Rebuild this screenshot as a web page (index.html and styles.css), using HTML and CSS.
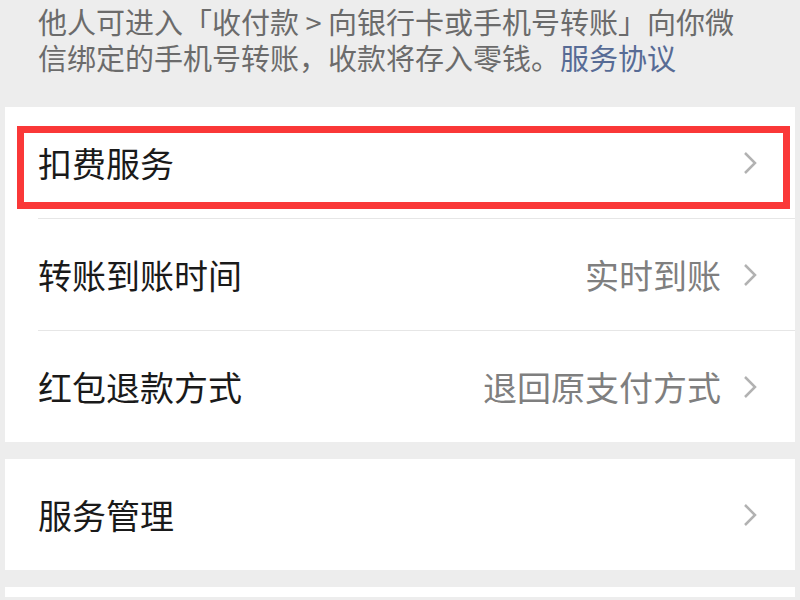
FILE: index.html
```html
<!DOCTYPE html>
<html lang="zh-CN">

<head>
    <meta charset="UTF-8">
    <meta name="viewport" content="width=device-width, initial-scale=1.0">
    <title>支付设置</title>
    <link rel="stylesheet" href="styles.css">
</head>

<body>
    <div class="page">
        <p class="tip">他人可进入「收付款 &gt; 向银行卡或手机号转账」向你微信绑定的手机号转账，收款将存入零钱。<a href="#">服务协议</a></p>

        <div class="group">
            <div class="cell marked">
                <span class="label">扣费服务</span>
                <span class="arrow"><svg width="14" height="24" viewBox="0 0 14 24"><polyline points="2,2 12,12 2,22" /></svg></span>
            </div>
            <div class="cell">
                <span class="label">转账到账时间</span>
                <span class="value">实时到账</span>
                <span class="arrow"><svg width="14" height="24" viewBox="0 0 14 24"><polyline points="2,2 12,12 2,22" /></svg></span>
            </div>
            <div class="cell">
                <span class="label">红包退款方式</span>
                <span class="value">退回原支付方式</span>
                <span class="arrow"><svg width="14" height="24" viewBox="0 0 14 24"><polyline points="2,2 12,12 2,22" /></svg></span>
            </div>
        </div>

        <div class="group">
            <div class="cell">
                <span class="label">服务管理</span>
                <span class="arrow"><svg width="14" height="24" viewBox="0 0 14 24"><polyline points="2,2 12,12 2,22" /></svg></span>
            </div>
        </div>

        <div class="group last"></div>
    </div>
</body>

</html>
```

FILE: styles.css
```css
body {
    margin: 0;
    background: #ededed;
    font-family: "Noto Sans CJK SC", "Noto Sans", sans-serif;
}

.page {
    padding: 0 5px;
}

.tip {
    margin: 0;
    padding: 3px 45px 32px 33px;
    font-size: 29px;
    line-height: 36px;
    color: #6b6b6b;
}

.tip a {
    color: #576b95;
    text-decoration: none;
}

.group {
    background: #ffffff;
    margin-bottom: 17px;
}

.group.last {
    height: 10px;
    margin-bottom: 0;
}

.cell {
    position: relative;
    display: flex;
    align-items: center;
    height: 111px;
    padding: 0 38px 0 33px;
    font-size: 34px;
}

.cell + .cell {
    border-top: 1px solid #e6e6e6;
    margin-left: 33px;
    padding-left: 0;
}

.label {
    flex: 1;
    color: #1a1a1a;
}

.value {
    color: #7f7f7f;
    margin-right: 22px;
}

.arrow {
    display: flex;
}

.arrow polyline {
    fill: none;
    stroke: #b2b2b2;
    stroke-width: 2.5;
}

.marked::after {
    content: "";
    position: absolute;
    left: 12px;
    top: 19px;
    right: 5px;
    bottom: 9px;
    border: 7px solid #fa3838;
}
```
